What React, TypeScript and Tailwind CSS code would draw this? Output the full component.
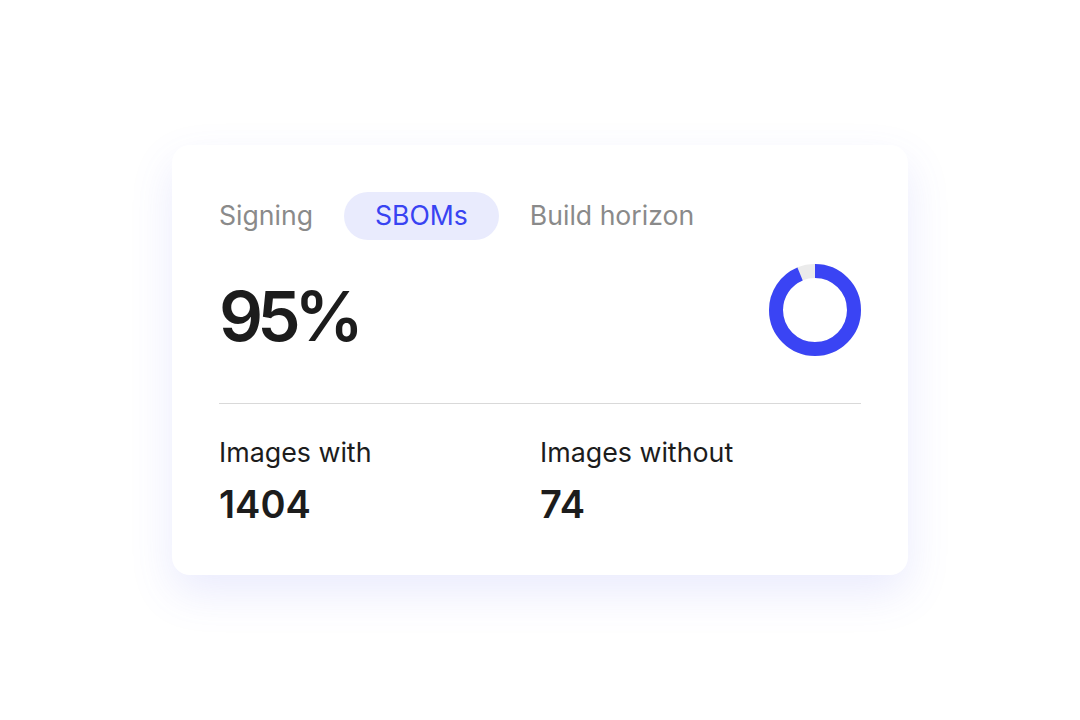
import React from "react";

const font = { fontFamily: "Inter, 'Noto Sans', sans-serif" };

function Donut() {
  const r = 39;
  const c = 2 * Math.PI * r;
  return (
    <svg width="92" height="92" viewBox="0 0 92 92">
      <circle cx="46" cy="46" r={r} fill="none" stroke="#ebebeb" strokeWidth="14" />
      <circle
        cx="46"
        cy="46"
        r={r}
        fill="none"
        stroke="#3a44f4"
        strokeWidth="14"
        strokeDasharray={`${c * 0.936} ${c}`}
        transform="rotate(-90 46 46)"
      />
    </svg>
  );
}

export default function App() {
  return (
    <div className="w-[1080px] h-[720px] bg-white flex items-center justify-center" style={font}>
      <div className="w-[736px] h-[430px] bg-white rounded-[18px] shadow-[0_18px_44px_rgba(90,100,240,0.13)] px-[47px] pt-[47px]">
        <div className="flex -ml-[31px] h-[48px]">
          <div className="px-[31px] h-[48px] flex items-center text-[26.6px] text-[#8a8a8a] rounded-full">Signing</div>
          <div className="px-[31px] h-[48px] flex items-center text-[26.6px] text-[#3843f2] bg-[#e9ebfd] rounded-full">SBOMs</div>
          <div className="px-[31px] h-[48px] flex items-center text-[26.6px] text-[#8a8a8a] rounded-full">Build horizon</div>
        </div>
        <div className="mt-[24px] flex items-center justify-between h-[92px]">
          <div className="text-[69px] leading-none font-semibold text-[#1c1c1c] pt-[12px] tracking-[-6px]">95%</div>
          <Donut />
        </div>
        <div className="mt-[47px] h-px bg-[#d9d9d9]" />
        <div className="mt-[30px] grid grid-cols-2">
          <div>
            <div className="text-[26.8px] leading-[36px] text-[#1c1c1c]">Images with</div>
            <div className="mt-[15px] text-[38px] leading-none font-semibold text-[#1c1c1c]">1404</div>
          </div>
          <div>
            <div className="text-[26.8px] leading-[36px] text-[#1c1c1c]">Images without</div>
            <div className="mt-[15px] text-[38px] leading-none font-semibold text-[#1c1c1c]">74</div>
          </div>
        </div>
      </div>
    </div>
  );
}
